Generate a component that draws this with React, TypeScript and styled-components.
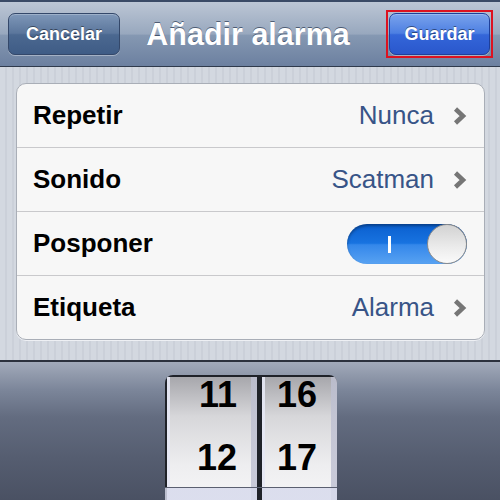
import styled, { createGlobalStyle } from 'styled-components';

const GlobalStyle = createGlobalStyle`
  body {
    margin: 0;
    font-family: "Liberation Sans", Arial, sans-serif;
    background: #4f5668;
  }
`;

const Screen = styled.div`
  width: 500px;
  height: 500px;
  overflow: hidden;
  display: flex;
  flex-direction: column;
  & > * {
    flex-shrink: 0;
  }
`;

const TopEdge = styled.div`
  height: 2px;
  background: #3a4a66;
`;

const NavBar = styled.div`
  height: 64px;
  display: flex;
  align-items: center;
  justify-content: space-between;
  padding: 0 7px 0 8px;
  background: linear-gradient(#bcc6d5 0%, #98a8be 50%, #8598b2 52%, #6c80a0 100%);
  border-bottom: 1px solid #2f3a4c;
`;

const BarButton = styled.button<{ $primary?: boolean }>`
  height: 42px;
  padding: 0 17px;
  border-radius: 7px;
  border: 1px solid ${({ $primary }) => ($primary ? '#1f3f9a' : '#34486a')};
  background: ${({ $primary }) =>
    $primary
      ? 'linear-gradient(#7aa3ec 0%, #4d7fe2 48%, #3466d9 52%, #2a57cc 100%)'
      : 'linear-gradient(#7e97b8 0%, #5b769c 48%, #4b6890 52%, #3f5c86 100%)'};
  box-shadow: inset 0 1px 0 rgba(255, 255, 255, 0.25), 0 1px 0 rgba(255, 255, 255, 0.35);
  color: #fff;
  font-family: "Liberation Sans", Arial, sans-serif;
  font-weight: bold;
  font-size: 18px;
  text-shadow: 0 -1px 0 rgba(0, 0, 0, 0.45);
  ${({ $primary }) => $primary && 'width: 101px; padding: 0;'}
`;

// red square frame drawn around the save button
const Highlight = styled.span`
  display: flex;
  padding: 1px;
  border: 2px solid #dc1220;
`;

const Title = styled.h1`
  margin: 0 0 0 -10px;
  font-size: 30.5px;
  font-weight: bold;
  color: #fff;
  text-shadow: 0 -1px 0 rgba(40, 55, 80, 0.7);
`;

const Settings = styled.div`
  height: 293px;
  box-sizing: border-box;
  padding: 16px 15px 0 16px;
  background: repeating-linear-gradient(90deg, #d3d8e0 0 5px, #cbd0d9 5px 7px);
`;

const Card = styled.div`
  background: #f7f7f7;
  border: 1px solid #a9aeb7;
  border-radius: 10px;
  box-shadow: 0 1px 0 #eef0f4;
  overflow: hidden;
`;

const Row = styled.div`
  height: 63px;
  display: flex;
  align-items: center;
  padding: 0 17px 0 16px;
  & + & {
    border-top: 1px solid #c9c9cc;
  }
`;

const Label = styled.span`
  flex: 1;
  font-size: 26px;
  font-weight: bold;
  color: #000;
`;

const Value = styled.span`
  font-size: 26px;
  color: #385487;
`;

const ChevronIcon = () => (
  <svg width="14" height="18" viewBox="0 0 14 18" style={{ marginLeft: 19 }}>
    <polyline points="2.5,2 10,9 2.5,16" fill="none" stroke="#767676" strokeWidth="4.5" />
  </svg>
);

const SwitchTrack = styled.div`
  position: relative;
  width: 120px;
  height: 40px;
  border-radius: 20px;
  background: linear-gradient(#0a5fcf 0%, #1873e0 48%, #3487ea 52%, #58a2f2 100%);
  box-shadow: inset 0 2px 3px rgba(0, 0, 0, 0.35);
`;

const SwitchMark = styled.span`
  position: absolute;
  left: 41px;
  top: 12px;
  width: 3px;
  height: 17px;
  background: #fff;
`;

const SwitchKnob = styled.span`
  position: absolute;
  right: 0;
  top: 0;
  width: 38px;
  height: 38px;
  border-radius: 50%;
  border: 1px solid #8c8c8c;
  background: linear-gradient(#d2d2d2 0%, #ececec 60%, #fafafa 100%);
`;

const PickerArea = styled.div`
  flex: 1;
  min-height: 0;
  overflow: hidden;
  border-top: 2px solid #2c313d;
  background: linear-gradient(#a2aaba 0%, #7c869a 20%, #636c80 40%, #555d70 70%, #4a5163 100%);
  display: flex;
  justify-content: center;
  padding-top: 13px;
`;

const Wheel = styled.div`
  position: relative;
  flex-shrink: 0;
  display: flex;
  width: 172px;
  height: 200px;
  margin-left: 2px;
  border-radius: 8px 8px 0 0;
  background: #1f2229;
  padding: 2px 0 0 2px;
  box-sizing: border-box;
  overflow: hidden;
`;

const Drum = styled.div<{ $width: number }>`
  width: ${({ $width }) => $width}px;
  display: flex;
  flex-direction: column;
  align-items: flex-end;
  padding-right: 20px;
  box-sizing: border-box;
  background:
    linear-gradient(90deg, rgba(230, 232, 245, 0.9) 0 3px, transparent 3px calc(100% - 6px), rgba(190, 192, 210, 0.8) calc(100% - 6px)),
    linear-gradient(#a7a7ac 0%, #d7d7da 20%, #eeeef0 45%, #f8f8f9 70%, #fbfbfc 100%);
  & + & {
    margin-left: 5px;
  }
`;

const Digit = styled.span`
  height: 36px;
  line-height: 36px;
  font-size: 36px;
  font-weight: bold;
  color: #000;
  & + & {
    margin-top: 27px;
  }
`;

const SelectionBar = styled.div`
  position: absolute;
  left: 0;
  right: 0;
  top: 112px;
  height: 40px;
  border-top: 1px solid #5a5f70;
  background: linear-gradient(90deg, rgba(215, 218, 236, 0.85) 0 92px, #1f2229 92px 97px, rgba(215, 218, 236, 0.85) 97px);
`;

const rows = [
  { label: 'Repetir', value: 'Nunca' },
  { label: 'Sonido', value: 'Scatman' },
  { label: 'Posponer', toggle: true },
  { label: 'Etiqueta', value: 'Alarma' },
];

export default function App() {
  return (
    <>
      <GlobalStyle />
      <Screen>
        <TopEdge />
        <NavBar>
          <BarButton>Cancelar</BarButton>
          <Title>Añadir alarma</Title>
          <Highlight>
            <BarButton $primary>Guardar</BarButton>
          </Highlight>
        </NavBar>
        <Settings>
          <Card>
            {rows.map((r) => (
              <Row key={r.label}>
                <Label>{r.label}</Label>
                {r.toggle ? (
                  <SwitchTrack>
                    <SwitchMark />
                    <SwitchKnob />
                  </SwitchTrack>
                ) : (
                  <>
                    <Value>{r.value}</Value>
                    <ChevronIcon />
                  </>
                )}
              </Row>
            ))}
          </Card>
        </Settings>
        <PickerArea>
          <Wheel>
            <Drum $width={90}>
              <Digit>11</Digit>
              <Digit>12</Digit>
            </Drum>
            <Drum $width={75}>
              <Digit>16</Digit>
              <Digit>17</Digit>
            </Drum>
            <SelectionBar />
          </Wheel>
        </PickerArea>
      </Screen>
    </>
  );
}
